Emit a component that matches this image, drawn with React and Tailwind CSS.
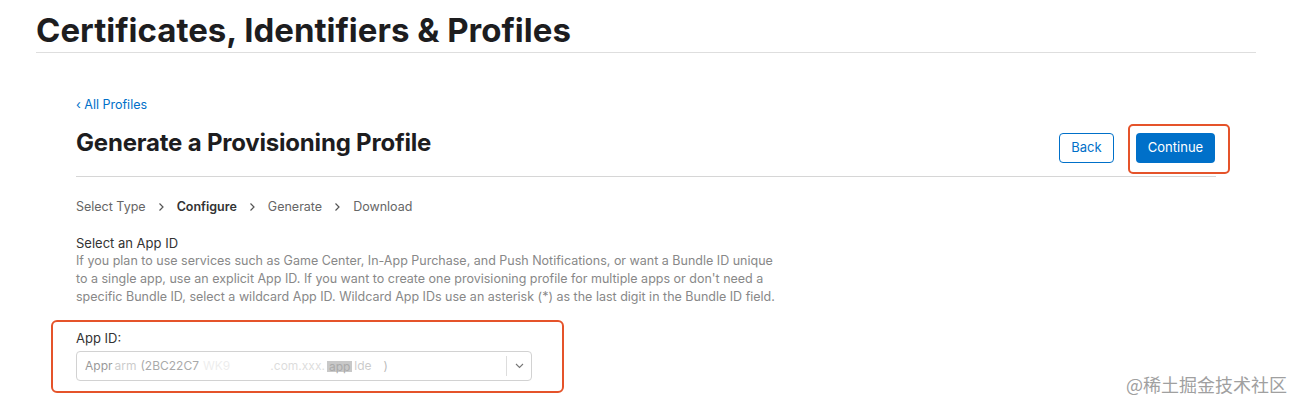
import React from "react";

const steps = [
  { label: "Select Type", active: false },
  { label: "Configure", active: true },
  { label: "Generate", active: false },
  { label: "Download", active: false },
];

const Chevron = () => (
  <svg width="7" height="10" viewBox="0 0 7 10" className="mx-[12px]">
    <path d="M1.5 1.5 L5 5 L1.5 8.5" fill="none" stroke="#555" strokeWidth="1.2" />
  </svg>
);

const App = () => {
  return (
    <div className="relative w-[1301px] h-[407px] bg-white overflow-hidden font-['Inter',sans-serif] text-[#1d1d1f]">
      <div className="ml-[36px] w-[1220px] pt-[10px] pb-[2px] border-b border-[#dedede]">
        <h1 className="text-[33px] leading-[40px] font-bold">
          Certificates, Identifiers &amp; Profiles
        </h1>
      </div>

      <div className="ml-[76px] w-[1140px]">
        <a className="block mt-[43px] text-[12.5px] leading-[18px] text-[#0070c9]">
          ‹ All Profiles
        </a>

        <div className="flex justify-between items-start mt-[15px] pb-[13px] border-b border-[#d6d6d6]">
          <h2 className="text-[24px] leading-[28px] font-bold tracking-[-0.2px]">
            Generate a Provisioning Profile
          </h2>
          <div className="flex gap-[22px] mt-[4px] mr-[1px]">
            <button className="h-[30px] w-[55px] rounded-[4px] border border-[#0070c9] text-[13px] text-[#0070c9] bg-white">
              Back
            </button>
            <div className="relative">
              <button className="h-[30px] w-[79px] rounded-[4px] bg-[#0070c9] text-[13px] text-white">
                Continue
              </button>
              <div className="absolute left-[-8px] top-[-9px] right-[-15px] bottom-[-11px] border-2 border-[#e5532a] rounded-[5px]" />
            </div>
          </div>
        </div>

        <div className="flex items-center mt-[21px] text-[12.5px] leading-[18px] text-[#666]">
          {steps.map((s, i) => (
            <React.Fragment key={s.label}>
              {i > 0 && <Chevron />}
              <span className={s.active ? "font-semibold text-[#333]" : ""}>{s.label}</span>
            </React.Fragment>
          ))}
        </div>

        <div className="mt-[18px] text-[13px] leading-[18px] text-[#333]">Select an App ID</div>
        <p className="whitespace-nowrap text-[12.5px] leading-[18px] text-[#888]">
          If you plan to use services such as Game Center, In-App Purchase, and Push Notifications, or want a Bundle ID unique
          <br />
          to a single app, use an explicit App ID. If you want to create one provisioning profile for multiple apps or don't need a
          <br />
          specific Bundle ID, select a wildcard App ID. Wildcard App IDs use an asterisk (*) as the last digit in the Bundle ID field.
        </p>

        <div className="relative mt-[23px] w-[456px]">
          <div className="text-[13px] leading-[18px] text-[#333]">App ID:</div>
          <div className="mt-[4px] h-[30px] w-[456px] flex items-center border border-[#d2d2d2] rounded-[4px] bg-white">
            <div className="flex-1 pl-[8px] flex items-center text-[12px] text-[#555] overflow-hidden whitespace-nowrap">
              <span className="opacity-60">Appr</span>
              <span className="opacity-30 ml-[2px]">arm</span>
              <span className="opacity-50 ml-[4px]">(2BC22C7</span>
              <span className="opacity-10 ml-[4px]">WK9</span>
              <span className="opacity-20 ml-[40px]">.com.xxx.</span>
              <span className="ml-[2px] bg-[#c8c8c8] text-[#aaa] px-[2px] leading-[11px]">app</span>
              <span className="opacity-30 ml-[2px]">lde</span>
              <span className="opacity-40 ml-[12px]">)</span>
            </div>
            <div className="h-[20px] border-l border-[#ddd]" />
            <div className="w-[24px] flex justify-center">
              <svg width="9" height="6" viewBox="0 0 9 6">
                <path d="M1 1 L4.5 4.5 L8 1" fill="none" stroke="#777" strokeWidth="1.1" />
              </svg>
            </div>
          </div>
          <div className="absolute left-[-25px] top-[-9px] right-[-32px] bottom-[-12px] border-2 border-[#e5532a] rounded-[6px]" />
        </div>
      </div>

      <div className="absolute left-[1126px] top-[373px] text-[18px] leading-[22px] text-[#a0a0a0] font-['Noto_Sans_CJK_SC',sans-serif]">
        @稀土掘金技术社区
      </div>
    </div>
  );
};

export default App;
